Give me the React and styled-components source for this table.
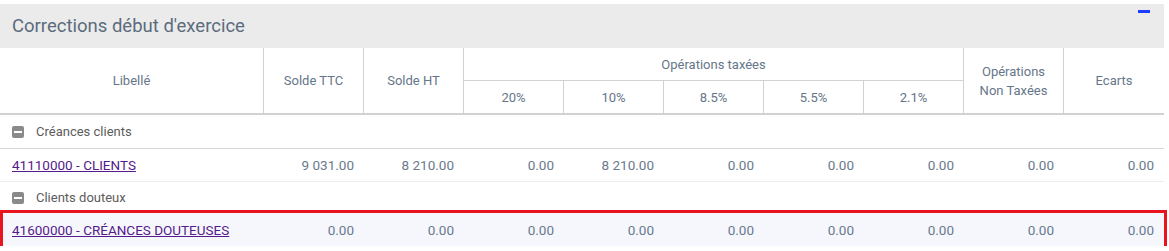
import React from "react";
import styled, { createGlobalStyle } from "styled-components";

const Global = createGlobalStyle`
  html, body { margin: 0; padding: 0; background: #ffffff; }
  body { font-family: Roboto, "Liberation Sans", Arial, sans-serif; }
`;

const Page = styled.div`
  padding-top: 4px;
  width: 1164px;
`;

const TitleBar = styled.div`
  height: 44px;
  background: #ebebeb;
  display: flex;
  align-items: center;
  justify-content: space-between;
  padding: 0 14px 0 12px;
  box-sizing: border-box;
`;

const Title = styled.h2`
  margin: 0;
  font-size: 18.5px;
  font-weight: 400;
  color: #5b6b7d;
`;

const Collapse = styled.button`
  align-self: flex-start;
  margin-top: 6px;
  width: 12px;
  height: 3px;
  padding: 0;
  border: none;
  background: #1c3cff;
  cursor: pointer;
`;

const COLS = "264px repeat(9, 100px)";

const HeadGrid = styled.div`
  display: grid;
  grid-template-columns: ${COLS};
  grid-template-rows: 33px 32px;
  border-bottom: 2px solid #d2d2d2;
`;

const HeadCell = styled.div`
  box-sizing: border-box;
  display: flex;
  align-items: center;
  justify-content: center;
  text-align: center;
  font-size: 13px;
  line-height: 19px;
  color: #66768a;
  border-right: ${(p) => (p.$last ? "none" : "1px solid #d2d2d2")};
  border-bottom: ${(p) => (p.$under ? "1px solid #d2d2d2" : "none")};
  grid-column: ${(p) => p.$col || "auto"};
  grid-row: ${(p) => p.$row || "auto"};
`;

const Row = styled.div`
  display: grid;
  grid-template-columns: ${COLS};
  align-items: center;
  height: ${(p) => p.$h}px;
  box-sizing: border-box;
  border-bottom: ${(p) => (p.$line ? `1px solid ${p.$line}` : "none")};
  background: ${(p) => p.$bg || "#ffffff"};
  position: relative;
`;

const Highlight = styled(Row)`
  &::after {
    content: "";
    position: absolute;
    top: -3px;
    bottom: -3px;
    left: 0;
    right: -3px;
    border: 3px solid #e8151f;
    pointer-events: none;
  }
`;

const GroupLabel = styled.div`
  grid-column: 1 / -1;
  display: flex;
  align-items: center;
  gap: 12px;
  padding-left: 12px;
  font-size: 13px;
  color: #5c5c5c;
`;

const MinusBox = styled.span`
  width: 12px;
  height: 12px;
  border-radius: 2px;
  background: #8a8a8a;
  display: flex;
  align-items: center;
  justify-content: center;
  &::before {
    content: "";
    width: 8px;
    height: 2px;
    background: #ffffff;
  }
`;

const LabelCell = styled.div`
  padding-left: 12px;
  font-size: 13.5px;
`;

const AccountLink = styled.a`
  color: #551a8b;
  text-decoration: underline;
  cursor: pointer;
`;

const Num = styled.div`
  text-align: right;
  padding-right: 10px;
  font-size: 13.5px;
  color: #6a7a8c;
`;

const headers = ["20%", "10%", "8.5%", "5.5%", "2.1%"];

function DataCells({ values }) {
  return values.map((v, i) => <Num key={i}>{v}</Num>);
}

export default function App() {
  return (
    <Page>
      <Global />
      <TitleBar>
        <Title>Corrections début d'exercice</Title>
        <Collapse aria-label="Réduire" />
      </TitleBar>

      <HeadGrid>
        <HeadCell $col="1" $row="1 / 3">Libellé</HeadCell>
        <HeadCell $col="2" $row="1 / 3">Solde TTC</HeadCell>
        <HeadCell $col="3" $row="1 / 3">Solde HT</HeadCell>
        <HeadCell $col="4 / 9" $row="1" $under>Opérations taxées</HeadCell>
        {headers.map((h, i) => (
          <HeadCell key={h} $col={`${4 + i}`} $row="2">{h}</HeadCell>
        ))}
        <HeadCell $col="9" $row="1 / 3">Opérations<br />Non Taxées</HeadCell>
        <HeadCell $col="10" $row="1 / 3" $last>Ecarts</HeadCell>
      </HeadGrid>

      <Row $h={34} $line="#d6d6d6">
        <GroupLabel><MinusBox />Créances clients</GroupLabel>
      </Row>
      <Row $h={33} $line="#ececec">
        <LabelCell><AccountLink>41110000 - CLIENTS</AccountLink></LabelCell>
        <DataCells values={["9 031.00", "8 210.00", "0.00", "8 210.00", "0.00", "0.00", "0.00", "0.00", "0.00"]} />
      </Row>
      <Row $h={31}>
        <GroupLabel><MinusBox />Clients douteux</GroupLabel>
      </Row>
      <Highlight $h={33} $bg="#f5f7fc">
        <LabelCell><AccountLink>41600000 - CRÉANCES DOUTEUSES</AccountLink></LabelCell>
        <DataCells values={["0.00", "0.00", "0.00", "0.00", "0.00", "0.00", "0.00", "0.00", "0.00"]} />
      </Highlight>
    </Page>
  );
}
